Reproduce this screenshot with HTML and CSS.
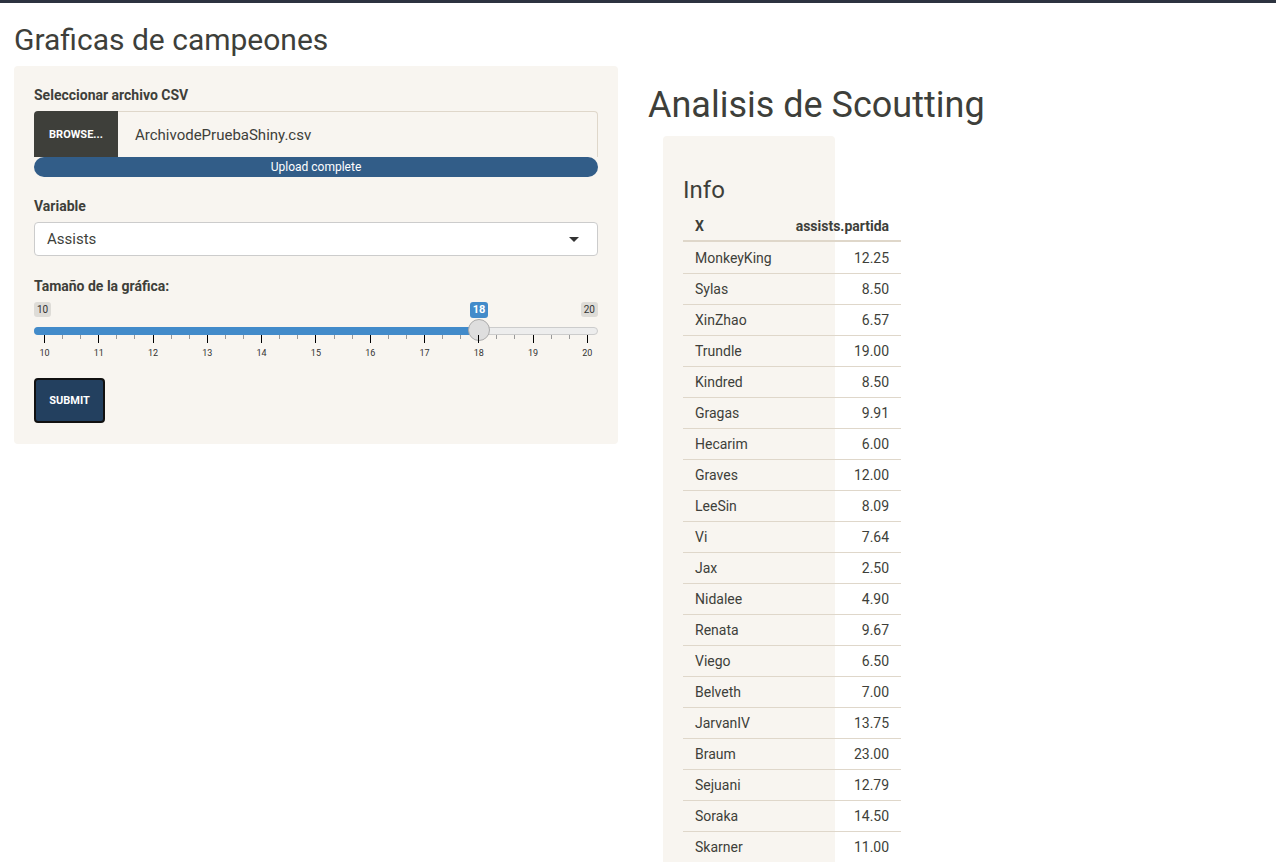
FILE: index.html
```html
<!DOCTYPE html>
<html lang="es">
<head>
<meta charset="utf-8">
<title>Graficas de campeones</title>
<link rel="stylesheet" href="styles.css">
</head>
<body>
<div class="page">
  <h2 class="title">Graficas de campeones</h2>
  <div class="layout">
    <aside class="sidebar well">
      <div class="group group-file">
        <label class="ctl-label">Seleccionar archivo CSV</label>
        <div class="file-input">
          <span class="browse">BROWSE...</span>
          <span class="file-name">ArchivodePruebaShiny.csv</span>
        </div>
        <div class="progress">Upload complete</div>
      </div>
      <div class="group group-select">
        <label class="ctl-label">Variable</label>
        <div class="select">
          <span>Assists</span>
          <span class="caret"></span>
        </div>
      </div>
      <div class="group group-slider">
        <label class="ctl-label">Tamaño de la gráfica:</label>
        <div class="irs">
          <span class="irs-min">10</span>
          <span class="irs-from">18</span>
          <span class="irs-max">20</span>
          <span class="irs-line"></span>
          <span class="irs-bar"></span>
          <span class="irs-handle"></span>
          <div class="irs-grid">
            <span class="tick major"><i>10</i></span><span class="tick"></span><span class="tick"></span>
            <span class="tick major"><i>11</i></span><span class="tick"></span><span class="tick"></span>
            <span class="tick major"><i>12</i></span><span class="tick"></span><span class="tick"></span>
            <span class="tick major"><i>13</i></span><span class="tick"></span><span class="tick"></span>
            <span class="tick major"><i>14</i></span><span class="tick"></span><span class="tick"></span>
            <span class="tick major"><i>15</i></span><span class="tick"></span><span class="tick"></span>
            <span class="tick major"><i>16</i></span><span class="tick"></span><span class="tick"></span>
            <span class="tick major"><i>17</i></span><span class="tick"></span><span class="tick"></span>
            <span class="tick major"><i>18</i></span><span class="tick"></span><span class="tick"></span>
            <span class="tick major"><i>19</i></span><span class="tick"></span><span class="tick"></span>
            <span class="tick major"><i>20</i></span>
          </div>
        </div>
      </div>
      <button class="submit" type="button">SUBMIT</button>
    </aside>
    <main class="main">
      <h1 class="main-title">Analisis de Scoutting</h1>
      <div class="info well">
        <h3 class="info-title">Info</h3>
        <table class="data">
          <thead>
            <tr><th class="l">X</th><th class="r">assists.partida</th></tr>
          </thead>
          <tbody>
            <tr><td>MonkeyKing</td><td class="r">12.25</td></tr>
            <tr><td>Sylas</td><td class="r">8.50</td></tr>
            <tr><td>XinZhao</td><td class="r">6.57</td></tr>
            <tr><td>Trundle</td><td class="r">19.00</td></tr>
            <tr><td>Kindred</td><td class="r">8.50</td></tr>
            <tr><td>Gragas</td><td class="r">9.91</td></tr>
            <tr><td>Hecarim</td><td class="r">6.00</td></tr>
            <tr><td>Graves</td><td class="r">12.00</td></tr>
            <tr><td>LeeSin</td><td class="r">8.09</td></tr>
            <tr><td>Vi</td><td class="r">7.64</td></tr>
            <tr><td>Jax</td><td class="r">2.50</td></tr>
            <tr><td>Nidalee</td><td class="r">4.90</td></tr>
            <tr><td>Renata</td><td class="r">9.67</td></tr>
            <tr><td>Viego</td><td class="r">6.50</td></tr>
            <tr><td>Belveth</td><td class="r">7.00</td></tr>
            <tr><td>JarvanIV</td><td class="r">13.75</td></tr>
            <tr><td>Braum</td><td class="r">23.00</td></tr>
            <tr><td>Sejuani</td><td class="r">12.79</td></tr>
            <tr><td>Soraka</td><td class="r">14.50</td></tr>
            <tr><td>Skarner</td><td class="r">11.00</td></tr>
          </tbody>
        </table>
      </div>
    </main>
  </div>
</div>
</body>
</html>
```

FILE: styles.css
```css
* { box-sizing: border-box; }

html, body {
  margin: 0;
  padding: 0;
  background: #ffffff;
}

body {
  border-top: 3px solid #2d3340;
  font-family: Roboto, "Liberation Sans", Arial, sans-serif;
  font-size: 15px;
  color: #3e3f3a;
}

.page {
  padding: 0 14px;
}

.title {
  font-size: 30px;
  font-weight: 400;
  line-height: 1.1;
  margin: 20px 0 10px;
}

.layout {
  display: flex;
  align-items: flex-start;
  gap: 30px;
}

.well {
  background: #f8f5f0;
  border-radius: 4px;
}

/* Sidebar */
.sidebar {
  width: 604px;
  flex: none;
  padding: 20px 20px 21px;
}

.group {
  display: flex;
  flex-direction: column;
}

.group-select { margin-top: 20px; }
.group-slider { margin-top: 21px; }

.ctl-label {
  font-size: 14px;
  font-weight: 700;
  line-height: 18px;
  margin-bottom: 7px;
}

.file-input {
  display: flex;
  height: 46px;
}

.browse {
  width: 84px;
  flex: none;
  background: #3e3f3a;
  color: #fff;
  font-size: 11px;
  font-weight: 700;
  display: flex;
  align-items: center;
  justify-content: center;
  border-radius: 4px 0 0 0;
}

.file-name {
  flex: 1;
  display: flex;
  align-items: center;
  padding-left: 17px;
  border: 1px solid #dfd7ca;
  border-left: none;
  border-bottom: none;
  border-radius: 0 4px 0 0;
  background: #f8f5f0;
  font-size: 15px;
}

.progress {
  height: 20px;
  background: #325d88;
  color: #fff;
  border-radius: 10px;
  font-size: 12px;
  line-height: 20px;
  text-align: center;
}

.select {
  height: 34px;
  background: #fff;
  border: 1px solid #cccccc;
  border-radius: 4px;
  display: flex;
  align-items: center;
  justify-content: space-between;
  padding: 0 18px 0 12px;
  font-size: 15px;
}

.caret {
  width: 0;
  height: 0;
  border-left: 5px solid transparent;
  border-right: 5px solid transparent;
  border-top: 5px solid #333;
}

/* Slider (ion.rangeSlider look) */
.irs {
  position: relative;
  height: 56px;
}

.irs-min, .irs-max, .irs-from {
  position: absolute;
  top: 0;
  height: 15px;
  line-height: 15px;
  padding: 0 3px;
  border-radius: 3px;
  font-size: 10px;
}

.irs-min, .irs-max {
  background: rgba(0, 0, 0, 0.1);
  color: #333;
}

.irs-min { left: 0; }
.irs-max { right: 0; }

.irs-from {
  left: 436px;
  width: 18px;
  padding: 0;
  text-align: center;
  background: #428bca;
  color: #fff;
  font-size: 11px;
  font-weight: 700;
  top: 0;
  height: 16px;
  line-height: 16px;
}

.irs-line {
  position: absolute;
  left: 0;
  right: 0;
  top: 25px;
  height: 8px;
  background: #ededed;
  border: 1px solid #cccccc;
  border-radius: 8px;
}

.irs-bar {
  position: absolute;
  left: 0;
  top: 25px;
  height: 8px;
  width: 446px;
  background: #428bca;
  border-radius: 8px 0 0 8px;
}

.irs-handle {
  position: absolute;
  left: 434px;
  top: 17px;
  width: 22px;
  height: 22px;
  border-radius: 50%;
  background: #dedede;
  border: 1px solid #ababab;
}

.irs-grid {
  position: absolute;
  left: 10px;
  right: 10px;
  top: 33px;
  display: flex;
  justify-content: space-between;
}

.tick {
  width: 1px;
  height: 4px;
  background: #999;
  display: flex;
  flex-direction: column;
  align-items: center;
}

.tick.major {
  height: 8px;
  background: #000;
}

.tick i {
  font-style: normal;
  font-size: 9px;
  line-height: 10px;
  color: #333;
  margin-top: 13px;
  white-space: nowrap;
}

.submit {
  display: block;
  margin-top: 20px;
  width: 71px;
  height: 45px;
  padding: 0;
  background: #23405f;
  border: 2px solid #111;
  border-radius: 4px;
  color: #fff;
  font-family: Roboto, "Liberation Sans", Arial, sans-serif;
  font-size: 11px;
  font-weight: 700;
}

/* Main */
.main {
  flex: 1;
  min-width: 0;
}

.main-title {
  font-size: 36px;
  font-weight: 400;
  line-height: 1.1;
  margin: 20px 0 10px;
}

.info {
  width: 172px;
  margin-left: 15px;
  padding: 20px;
}

.info-title {
  font-size: 24px;
  font-weight: 400;
  line-height: 1.1;
  margin: 21px 0 10.5px;
}

.data {
  border-collapse: separate;
  border-spacing: 0;
  font-size: 14px;
}

.data th {
  font-weight: 700;
  padding: 4px 12px;
  line-height: 19px;
  border-bottom: 2px solid #dfd7ca;
  white-space: nowrap;
}

.data td {
  padding: 5px 12px;
  line-height: 20px;
  border-top: 1px solid #dfd7ca;
  white-space: nowrap;
}

.data tbody tr:first-child td {
  border-top: none;
  padding-top: 6px;
}

.data .l { text-align: left; }
.data .r { text-align: right; }
```
